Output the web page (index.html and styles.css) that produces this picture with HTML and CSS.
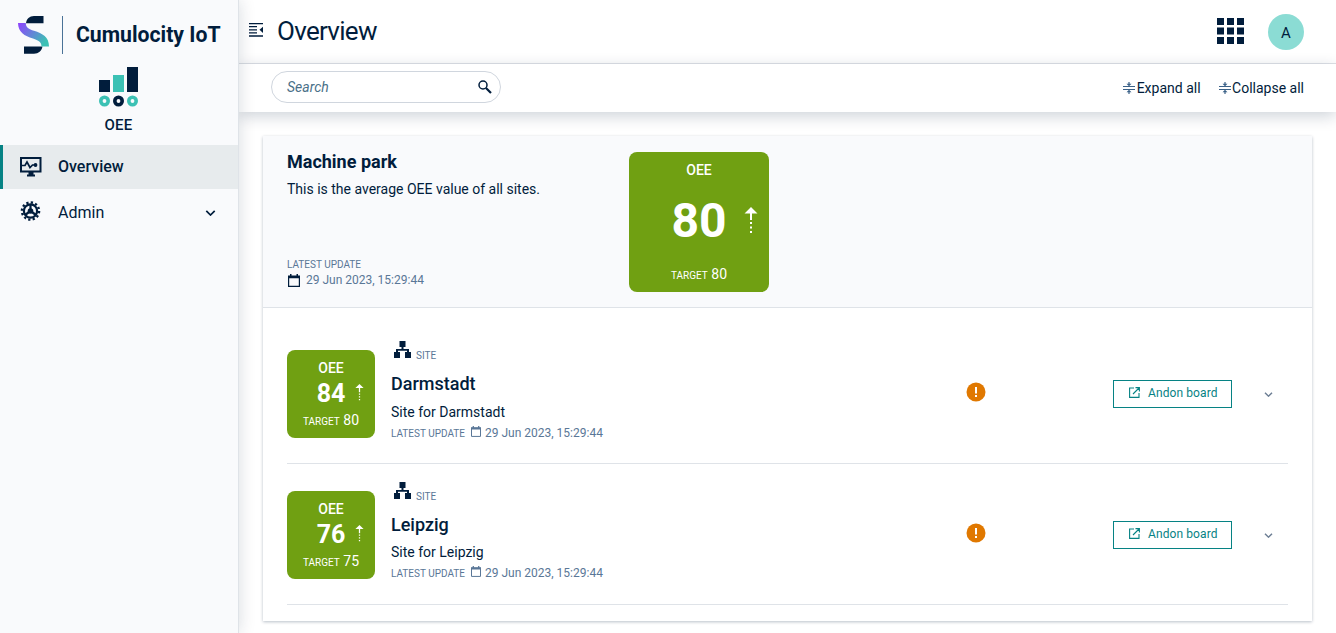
FILE: index.html
```
<!DOCTYPE html>
<html lang="en">
<head>
<meta charset="utf-8">
<title>Overview - OEE</title>
<link rel="stylesheet" href="styles.css">
</head>
<body>
<svg width="0" height="0" class="defs">
  <symbol id="cal" viewBox="0 0 12 13"><path d="M.6 2.5h10.8v9.9H.6z" fill="none" stroke="currentColor" stroke-width="1.2"/><path d="M0 1.5h12v2.7H0zM2 0h1.5v2H2zM8.500 0H10v2H8.500z" fill="currentColor"/></symbol>
  <symbol id="site" viewBox="0 0 17 17"><path d="M5.500 0h6v6h-2v2h5.500v3h2v6h-6v-6h2V9.800H4V11h2v6H0v-6h2V8h5.500V6h-2z" fill="currentColor"/></symbol>
  <symbol id="up" viewBox="0 0 14 27"><path d="M7 0l6.500 6.500H8V13H6V6.500H.5zM6 15h2v2H6zM6 19.500h2v2H6zM6 24h2v2H6z" fill="currentColor"/></symbol>
  <symbol id="chev" viewBox="0 0 10 6"><path d="M.8.8L5 5 9.200.8" fill="none" stroke="currentColor" stroke-width="1.700"/></symbol>
  <symbol id="updown" viewBox="0 0 12 12"><path d="M0 4.500h12M0 7.500h12" stroke="currentColor" stroke-width="1.200"/><path d="M5.400 0h1.200v1.800H8.500L6 4.300 3.500 1.800h1.900zM6 7.700l2.500 2.500H6.600V12H5.400v-1.800H3.500z" fill="currentColor"/></symbol>
  <symbol id="ext" viewBox="0 0 11 11"><path d="M5 1H.6v9.400H10V6M6.500.6H10.400V4.500M10 1L4 7" fill="none" stroke="currentColor" stroke-width="1.100"/></symbol>
  <symbol id="warn" viewBox="0 0 20 20"><circle cx="10" cy="10" r="9.500" fill="#e07800"/><path d="M9 5h2v6.500H9zM9 13h2v2H9z" fill="#fff"/></symbol>
</svg>
<aside class="sidebar">
  <div class="brand">
    <svg class="brand-mark" width="32" height="40" viewBox="0 0 32 40">
      <defs><linearGradient id="g" x1="0" y1="0" x2="1" y2=".6"><stop offset="0" stop-color="#9040ff"/><stop offset="1" stop-color="#3cc1b4"/></linearGradient></defs>
      <path d="M8 8.200C8.500 4 11.500 1 16 1h9.500v7.200zM6 31.500h18.500c-.8 4.500-4 7.200-8.500 7.200H6z" fill="#011d3c"/>
      <path d="M0 8h7.800c0 4.500 3 6.200 8.200 7.800 8.500 2.700 15 6.200 15 15.700h-7.500c0-4.500-3-6.200-8.500-8C6.500 20.800.2 17.500 0 8z" fill="url(#g)"/>
    </svg>
    <span class="brand-line"></span>
    <span class="brand-name">Cumulocity IoT</span>
  </div>
  <div class="app">
    <svg width="39" height="40" viewBox="0 0 39 40">
      <path d="M0 13h11v12H0zM28 0h11v25H28z" fill="#011d3c"/><path d="M14 8h11v17H14z" fill="#3cc1b4"/>
      <g fill="none" stroke-width="3.600"><circle cx="5.500" cy="34" r="3.700" stroke="#3cc1b4"/><circle cx="19.500" cy="34" r="3.700" stroke="#011d3c"/><circle cx="33.500" cy="34" r="3.700" stroke="#3cc1b4"/></g>
    </svg>
    <div class="app-name">OEE</div>
  </div>
  <nav>
    <a class="nav-item active">
      <svg width="22" height="20" viewBox="0 0 22 20"><path d="M1 1h19.500v13.500H1z" fill="none" stroke="currentColor" stroke-width="2"/><path d="M8.500 15h5v2.500H15V19.500H7v-2h1.500z" fill="currentColor"/><path d="M2 8.500h3L7 5l3 5.500L12.500 8H15" fill="none" stroke="currentColor" stroke-width="1.700"/><circle cx="15.500" cy="8" r="1.900" fill="currentColor"/></svg>
      <span>Overview</span>
    </a>
    <a class="nav-item">
      <svg class="gear" width="22" height="20" viewBox="0 0 22 20"><circle cx="10.500" cy="10" r="8.600" fill="none" stroke="currentColor" stroke-width="2.400" stroke-dasharray="2.250 2.250"/><circle cx="10.500" cy="10" r="6.600" fill="none" stroke="currentColor" stroke-width="2.200"/><circle cx="10.500" cy="10" r="2.800" fill="currentColor"/><path d="M10.500 10V3M10.500 10l-5.500 4M10.500 10l5.500 4" stroke="currentColor" stroke-width="2.200"/></svg>
      <span>Admin</span>
      <svg class="nav-chev" width="11" height="6"><use href="#chev"/></svg>
    </a>
  </nav>
</aside>
<main class="main">
  <header class="topbar">
    <svg class="collapse" width="14" height="14" viewBox="0 0 14 14"><path d="M0 .6h14M0 3.700h8M0 6.800h8M0 9.900h8M0 13h14" stroke="#011d3c" stroke-width="1.300"/><path d="M14 3.700v6.200L10.500 6.800z" fill="#011d3c"/></svg>
    <h1>Overview</h1>
    <svg class="apps" width="27" height="26" viewBox="0 0 27 26"><path d="M0 0h7v7H0zM10 0h7v7h-7zM20 0h7v7h-7zM0 9.500h7v7H0zM10 9.500h7v7h-7zM20 9.500h7v7h-7zM0 19h7v7H0zM10 19h7v7h-7zM20 19h7v7h-7z" fill="#011d3c"/></svg>
    <div class="avatar">A</div>
  </header>
  <div class="actionbar">
    <div class="search"><span>Search</span>
      <svg width="14" height="14" viewBox="0 0 14 14"><circle cx="5" cy="5" r="4" fill="none" stroke="#011d3c" stroke-width="1.500"/><path d="M8 8l5 5" stroke="#011d3c" stroke-width="2.200"/></svg>
    </div>
    <div class="actions">
      <span><svg width="12" height="12"><use href="#updown"/></svg>Expand all</span>
      <span><svg width="12" height="12"><use href="#updown"/></svg>Collapse all</span>
    </div>
  </div>
  <section class="card">
    <div class="park">
      <div class="park-info">
        <h2>Machine park</h2>
        <p>This is the average OEE value of all sites.</p>
        <div class="park-update">
          <div class="label">LATEST UPDATE</div>
          <div class="date"><svg width="12" height="13"><use href="#cal"/></svg>29 Jun 2023, 15:29:44</div>
        </div>
      </div>
      <div class="tile big">
        <div class="tile-title">OEE</div>
        <div class="tile-value">80<svg class="trend" width="14" height="27"><use href="#up"/></svg></div>
        <div class="tile-target"><small>TARGET</small> 80</div>
      </div>
    </div>
    <div class="sites">
      <div class="site">
        <div class="tile">
          <div class="tile-title">OEE</div>
          <div class="tile-value">84<svg class="trend" width="9" height="17"><use href="#up"/></svg></div>
          <div class="tile-target"><small>TARGET</small> 80</div>
        </div>
        <div class="site-info">
          <div class="site-type"><svg width="17" height="17"><use href="#site"/></svg><span>SITE</span></div>
          <h3>Darmstadt</h3>
          <p>Site for Darmstadt</p>
          <div class="site-update"><span class="label">LATEST UPDATE</span><svg width="10" height="11"><use href="#cal"/></svg><span class="date">29 Jun 2023, 15:29:44</span></div>
        </div>
        <svg class="warn" width="20" height="20"><use href="#warn"/></svg>
        <button class="andon"><svg width="11" height="11"><use href="#ext"/></svg>Andon board</button>
        <svg class="more" width="9" height="5"><use href="#chev"/></svg>
      </div>
      <div class="site second">
        <div class="tile">
          <div class="tile-title">OEE</div>
          <div class="tile-value">76<svg class="trend" width="9" height="17"><use href="#up"/></svg></div>
          <div class="tile-target"><small>TARGET</small> 75</div>
        </div>
        <div class="site-info">
          <div class="site-type"><svg width="17" height="17"><use href="#site"/></svg><span>SITE</span></div>
          <h3>Leipzig</h3>
          <p>Site for Leipzig</p>
          <div class="site-update"><span class="label">LATEST UPDATE</span><svg width="10" height="11"><use href="#cal"/></svg><span class="date">29 Jun 2023, 15:29:44</span></div>
        </div>
        <svg class="warn" width="20" height="20"><use href="#warn"/></svg>
        <button class="andon"><svg width="11" height="11"><use href="#ext"/></svg>Andon board</button>
        <svg class="more" width="9" height="5"><use href="#chev"/></svg>
      </div>
    </div>
  </section>
</main>
</body>
</html>
```
FILE: styles.css
```
* { box-sizing: border-box; margin: 0; padding: 0; }
body { display: flex; height: 633px; overflow: hidden; font: 14px/20px Roboto, sans-serif; color: #011d3c; background: #fff; }
svg { display: block; flex: none; }
.defs { position: absolute; }
.sidebar { width: 239px; flex: none; background: #f9fafc; border-right: 1px solid #dfe3e8; box-shadow: 0 0 16px rgba(1, 29, 60, .16); z-index: 2; }
.brand { display: flex; align-items: center; height: 67px; padding: 2px 0 0 18px; }
.brand-line { width: 1px; height: 38px; margin: 0 13px 0 12px; background: #4a7297; }
.brand-name { font-size: 21.200px; font-weight: 700; line-height: 24px; white-space: nowrap; }
.app { display: flex; flex-direction: column; align-items: center; height: 78px; padding-right: 1px; }
.app-name { margin-top: 8px; font-size: 15px; font-weight: 500; letter-spacing: .2px; }
.nav-item { display: flex; align-items: center; height: 44px; margin-bottom: 2px; padding-left: 20px; font-size: 16px; }
.nav-item span { margin-left: 16px; }
.nav-item.active { border-left: 3px solid #068284; padding-left: 17px; background: #e7ebed; font-weight: 500; }
.nav-item.active svg { margin-top: -1px; }
.gear { margin-top: -4px; }
.nav-chev { margin: 0 22px 0 auto; }
.main { flex: 1; min-width: 0; }
.topbar { display: flex; align-items: center; height: 64px; padding: 0 32px 0 10px; border-bottom: 1px solid #dfe2e7; }
.collapse { margin: -3px 14px 0 0; }
h1 { margin-top: -2px; font-size: 26px; font-weight: 400; line-height: 32px; letter-spacing: -.7px; }
.apps { margin: -2px 24px 0 auto; }
.avatar { width: 36px; height: 36px; border-radius: 50%; background: #8bdcd4; font-size: 15px; line-height: 38px; text-align: center; }
.actionbar { display: flex; align-items: center; justify-content: space-between; height: 48px; padding: 0 32px; box-shadow: 0 4px 16px rgba(1, 29, 60, .2); }
.search { display: flex; align-items: center; justify-content: space-between; width: 230px; height: 32px; margin-top: -2px; padding: 0 8px 0 15px; border: 1px solid #d0d6de; border-radius: 16px; color: #4a7088; font-style: italic; }
.actions { display: flex; gap: 18px; }
.actions span { display: flex; align-items: center; gap: 1.500px; }
.actions svg { color: #3c6288; }
.card { width: 1049px; height: 485px; margin: 24px 0 0 24px; background: #fff; box-shadow: 0 1px 3px rgba(1, 29, 60, .28); }
.park { display: flex; height: 172px; padding: 16px 24px; background: #f9fafc; border-bottom: 1px solid #dfe3e8; }
.park-info { width: 342px; }
h2 { font-size: 18px; font-weight: 700; line-height: 20px; }
.park-info p { margin-top: 7px; }
.park-update { margin-top: 58px; color: #5a7797; }
.park-update .label { font-size: 10px; line-height: 15px; }
.date { font-size: 12px; color: #5a7797; }
.park-update .date { display: flex; line-height: 16px; gap: 6px; padding-left: 1px; align-items: center; }
.park-update svg { color: #011d3c; margin-top: 1px; }
.tile { width: 88px; height: 88px; padding-top: 8px; flex: none; border-radius: 8px; background: #70a012; color: #fff; text-align: center; }
.tile-title { font-weight: 500; line-height: 20px; }
.tile-value { position: relative; font-size: 25px; font-weight: 700; line-height: 32px; }
.trend { position: absolute; right: 11px; top: 6px; }
.tile-target { line-height: 20px; }
.tile small { font-size: 10px; }
.tile.big { width: 140px; height: 140px; }
.big .tile-value { font-size: 48px; line-height: 82px; }
.big .trend { top: 27px; }
.big .tile-target { line-height: 24px; }
.sites { padding: 15px 24px 0; }
.site { display: flex; height: 141px; border-bottom: 1px solid #dfe3e8; padding-top: 27px; }
.site-info { width: 576px; margin: -9px 0 0 16px; }
.second .site-info p { margin-top: -1px; }
.site-type { display: flex; align-items: flex-start; height: 29px; padding-left: 3px; }
.site-type span { margin: 9px 0 0 5px; font-size: 10px; line-height: 12px; color: #5a7797; }
h3 { font-size: 18px; font-weight: 500; line-height: 28px; }
.site-info p { line-height: 28px; }
.site-update { display: flex; align-items: center; height: 14px; }
.site-update .label { width: 80px; padding-top: 1px; font-size: 10px; color: #5a7797; }
.site-update svg { margin: -3px 4px 0 0; color: #5a7797; }
.warn { margin: 32px 127px 0 -1px; }
.andon { display: flex; align-items: center; gap: 8px; width: 119px; height: 28px; margin-top: 30px; padding: 0 0 3px 15px; background: #fff; border: 1px solid #068284; color: #068284; font: 12px Roboto, sans-serif; letter-spacing: .1px; }
.more { margin: 42px 0 0 32px; color: #6b7d93; }
```
